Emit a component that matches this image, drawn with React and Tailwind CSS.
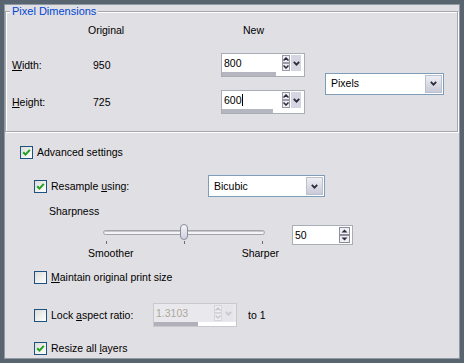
import React from "react";

function Chevron({ color = "#2b2b3a" }) {
  return (
    <svg width="7" height="5" viewBox="0 0 7 5">
      <path d="M0.8 0.8 L3.5 3.6 L6.2 0.8" stroke={color} strokeWidth="1.8" fill="none" />
    </svg>
  );
}

function Arrow({ up, color = "#2b2b3a" }) {
  return (
    <svg width="7" height="4" viewBox="0 0 7 4">
      <path d={up ? "M0.5 3.5 L3.5 0.5 L6.5 3.5 Z" : "M0.5 0.5 L3.5 3.5 L6.5 0.5 Z"} fill={color} />
    </svg>
  );
}

function Check({ checked }) {
  return (
    <span className="w-[13px] h-[13px] shrink-0 border border-[#1c5180] bg-linear-to-br from-[#dcdcd7] to-white flex items-center justify-center">
      {checked && (
        <svg width="9" height="9" viewBox="0 0 9 9">
          <path d="M1.2 4.2 L3.5 6.6 L7.8 1.8" stroke="#21a121" strokeWidth="2" fill="none" />
        </svg>
      )}
    </span>
  );
}

function CheckRow({ checked, children, className = "" }) {
  return (
    <div className={"flex items-center gap-[4px] " + className}>
      <Check checked={checked} />
      <span>{children}</span>
    </div>
  );
}

function SmallSpin({ disabled }) {
  const c = disabled ? "#c9c8cf" : "#2b2b3a";
  const b = disabled ? "border-[#d6d5dc]" : "border-[#9b9aa8]";
  return (
    <div className="flex flex-col">
      <span className={"w-[8px] h-[8px] border " + b + " bg-[#eeeef3] flex items-center justify-center"}>
        <svg width="6" height="4" viewBox="0 0 6 4"><path d="M0.5 3.5 L3 1 L5.5 3.5" stroke={c} strokeWidth="1.5" fill="none" /></svg>
      </span>
      <span className={"w-[8px] h-[8px] border " + b + " bg-[#eeeef3] flex items-center justify-center"}>
        <svg width="6" height="4" viewBox="0 0 6 4"><path d="M0.5 0.5 L3 3 L5.5 0.5" stroke={c} strokeWidth="1.5" fill="none" /></svg>
      </span>
    </div>
  );
}

function SliderEdit({ value, fill, caret, disabled }) {
  return (
    <div
      className={
        "w-[84px] h-[24px] border flex flex-col " +
        (disabled ? "border-[#c9c8ce] bg-[#e9e8ed] text-[#aca899]" : "border-[#a9adb6] bg-white")
      }
    >
      <div className="flex-1 flex items-center pl-[2px] pr-[3px]">
        <span className="leading-none">{value}</span>
        {caret && <span className="w-[1px] h-[12px] bg-black" />}
        <div className="ml-auto flex items-center gap-[1px]">
          <SmallSpin disabled={disabled} />
          <span
            className={
              "w-[10px] h-[16px] flex items-center justify-center " +
              (disabled ? "bg-[#e6e5eb]" : "bg-[#d6d6e2]")
            }
          >
            <Chevron color={disabled ? "#c9c8cf" : "#2b2b3a"} />
          </span>
        </div>
      </div>
      <div className="h-[4px] bg-white">
        <div className={"h-full " + (disabled ? "bg-[#b1b0bb]" : "bg-[#b6b6c0]")} style={{ width: fill }} />
      </div>
    </div>
  );
}

function Select({ value, width }) {
  return (
    <div className={"h-[22px] border border-[#7f9db9] bg-white flex items-center pl-[5px] pr-[1px] " + width}>
      <span>{value}</span>
      <span className="ml-auto w-[17px] h-[18px] border border-[#bac0cc] bg-linear-to-b from-[#eeeef4] to-[#c9cad9] flex items-center justify-center">
        <Chevron />
      </span>
    </div>
  );
}

function Tick() {
  return <span className="w-[1px] h-[3px] bg-[#6b6b6b]" />;
}

export default function App() {
  return (
    <div className="w-[464px] h-[363px] border-[4px] border-[#586570] shadow-[inset_0_0_0_1px_#8e99a2] bg-[#e0dfe3] text-black text-[10.5px] leading-[13px] font-['Liberation_Sans',Arial,sans-serif] overflow-hidden">
      {/* Pixel Dimensions group */}
      <div className="relative mt-[7px] ml-[1px] w-[453px] h-[121px] border border-[#a7a6ad] shadow-[1px_1px_0_#ffffff,inset_1px_1px_0_#ffffff]">
        <span className="absolute -top-[7px] left-[4px] px-[2px] bg-[#e0dfe3] text-[#0046d5] text-[11px]">
          Pixel Dimensions
        </span>

        <div className="flex pl-[6px] pt-[12px] h-[25px]">
          <span className="w-[76px]" />
          <span className="w-[40px]">Original</span>
          <span className="ml-[115px]">New</span>
        </div>

        <div className="flex items-center pl-[6px] mt-[16px]">
          <div className="flex flex-col gap-[13px]">
            <div className="flex items-center">
              <span className="w-[81px]"><u>W</u>idth:</span>
              <span className="w-[128px]">950</span>
              <SliderEdit value="800" fill="54px" />
            </div>
            <div className="flex items-center">
              <span className="w-[81px]"><u>H</u>eight:</span>
              <span className="w-[128px]">725</span>
              <SliderEdit value="600" fill="51px" caret />
            </div>
          </div>
          <div className="ml-[20px]">
            <Select value="Pixels" width="w-[119px]" />
          </div>
        </div>
      </div>

      {/* Advanced settings */}
      <CheckRow checked className="ml-[16px] mt-[14px]">Advanced settings</CheckRow>

      <div className="flex items-center ml-[30px] mt-[16px]">
        <CheckRow checked className="w-[174px]">Resample <u>u</u>sing:</CheckRow>
        <Select value="Bicubic" width="w-[117px]" />
      </div>

      <div className="ml-[45px] mt-[8px]">Sharpness</div>

      <div className="flex items-start ml-[84px] mt-[6px]">
        <div className="w-[191px] flex flex-col">
          <div className="relative h-[16px] flex items-center pl-[15px] pr-[14px]">
            <div className="w-full h-[5px] rounded-full border border-[#a3a3a8] bg-[#f4f4f6] shadow-[inset_0_1px_0_#c8c8cc]" />
            <span className="absolute left-[92px] top-0 w-[8px] h-[16px] rounded-[4px] border border-[#8d8c9a] bg-linear-to-b from-[#f4f4fa] to-[#cfcfe0]" />
          </div>
          <div className="flex justify-between pl-[18px] pr-[16px] mt-[1px]">
            <Tick />
            <Tick />
            <Tick />
          </div>
          <div className="flex justify-between mt-[3px]">
            <span>Smoother</span>
            <span>Sharper</span>
          </div>
        </div>
        <div className="ml-[13px] mt-[1px] w-[61px] h-[20px] border border-[#a9adb6] bg-white flex items-center pl-[2px] pr-[2px]">
          <span>50</span>
          <div className="ml-auto flex flex-col">
            <span className="w-[11px] h-[8px] border border-[#8d8c9a] bg-[#eeeef3] flex items-center justify-center">
              <Arrow up />
            </span>
            <span className="w-[11px] h-[8px] border border-[#8d8c9a] bg-[#eeeef3] flex items-center justify-center">
              <Arrow />
            </span>
          </div>
        </div>
      </div>

      <CheckRow className="ml-[30px] mt-[11px]"><u>M</u>aintain original print size</CheckRow>

      <div className="flex items-center ml-[30px] mt-[19px]">
        <CheckRow className="w-[119px]">Lock <u>a</u>spect ratio:</CheckRow>
        <SliderEdit value="1.3103" fill="44px" disabled />
        <span className="ml-[11px]">to 1</span>
      </div>

      <CheckRow checked className="ml-[30px] mt-[15px]">Resize all <u>l</u>ayers</CheckRow>
    </div>
  );
}
